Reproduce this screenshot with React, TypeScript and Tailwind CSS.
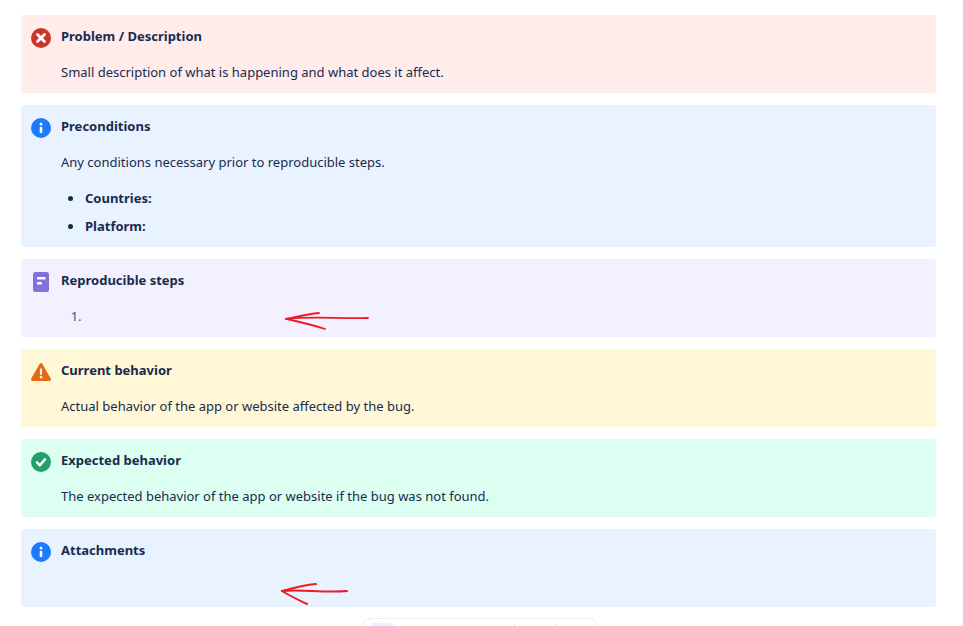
import React from "react";

const Err = () => (
  <svg width="20" height="20" viewBox="0 0 20 20"><circle cx="10" cy="10" r="10" fill="#C9372C" /><path d="M6.5 6.5l7 7M13.5 6.5l-7 7" stroke="#fff" strokeWidth="2.8" strokeLinecap="round" /></svg>
);
const Info = () => (
  <svg width="20" height="20" viewBox="0 0 20 20"><circle cx="10" cy="10" r="10" fill="#1D7AFC" /><circle cx="10" cy="5.9" r="1.5" fill="#fff" /><rect x="8.7" y="8.8" width="2.6" height="6.4" rx="1.1" fill="#fff" /></svg>
);
const Note = () => (
  <svg width="16" height="20" viewBox="0 0 16 20"><rect width="16" height="20" rx="2.5" fill="#8270DB" /><rect x="4" y="5" width="8.5" height="2.6" rx="0.6" fill="#fff" /><rect x="4" y="10" width="5" height="2.6" rx="0.6" fill="#fff" /></svg>
);
const Warn = () => (
  <svg width="20" height="18" viewBox="0 0 20 18"><path d="M8.6.9a1.6 1.6 0 0 1 2.8 0l8.3 14.7A1.6 1.6 0 0 1 18.3 18H1.7a1.6 1.6 0 0 1-1.4-2.4z" fill="#E56910" /><rect x="8.9" y="5.5" width="2.2" height="6.2" rx="1" fill="#fff" /><circle cx="10" cy="14.1" r="1.3" fill="#fff" /></svg>
);
const Ok = () => (
  <svg width="20" height="20" viewBox="0 0 20 20"><circle cx="10" cy="10" r="10" fill="#22A06B" /><path d="M6 10.4l2.9 2.9L14 7.4" stroke="#fff" strokeWidth="2.5" fill="none" strokeLinecap="round" strokeLinejoin="round" /></svg>
);

function Panel({ bg, icon, title, children }: { bg: string; icon: React.ReactNode; title: string; children: React.ReactNode }) {
  return (
    <div className={`relative rounded-[3px] pt-[10px] pb-[10px] pr-[10px] pl-[40px] ${bg}`}>
      <div className="absolute left-[10px] top-[13px] flex h-[20px] w-[20px] items-center justify-center">{icon}</div>
      <div className="h-[22px] text-[13px] font-bold leading-[22px]">{title}</div>
      {children}
    </div>
  );
}

export default function App() {
  return (
    <div className="relative h-[626px] w-[963px] overflow-hidden bg-white text-[#172B4D] [font-family:'Noto_Sans',sans-serif]">
      <div className="flex flex-col gap-[12px] pt-[15px] pl-[21px] w-[936px]">
        <Panel bg="bg-[#FFECEB]" icon={<Err />} title="Problem / Description">
          <p className="mt-[14px] h-[22px] text-[13px] leading-[22px]">Small description of what is happening and what does it affect.</p>
        </Panel>
        <Panel bg="bg-[#E9F2FF]" icon={<Info />} title="Preconditions">
          <p className="mt-[14px] text-[13px] leading-[22px]">Any conditions necessary prior to reproducible steps.</p>
          <ul className="mt-[14px] flex list-disc flex-col gap-[6px] pl-[24px] text-[13px] font-bold leading-[20px] marker:text-[15px]">
            <li className="h-[22px]">Countries:</li>
            <li className="h-[22px]">Platform:</li>
          </ul>
        </Panel>
        <Panel bg="bg-[#F3F0FF]" icon={<Note />} title="Reproducible steps">
          <ol className="mt-[14px] h-[22px] list-decimal pl-[24px] text-[13px] leading-[22px] marker:text-[#44546F]">
            <li></li>
          </ol>
        </Panel>
        <Panel bg="bg-[#FFF7D6]" icon={<Warn />} title="Current behavior">
          <p className="mt-[14px] text-[13px] leading-[22px]">Actual behavior of the app or website affected by the bug.</p>
        </Panel>
        <Panel bg="bg-[#DCFFF1]" icon={<Ok />} title="Expected behavior">
          <p className="mt-[14px] text-[13px] leading-[22px]">The expected behavior of the app or website if the bug was not found.</p>
        </Panel>
        <Panel bg="bg-[#E9F2FF]" icon={<Info />} title="Attachments">
          <div className="mt-[14px] h-[22px]" />
        </Panel>
      </div>

      <svg className="absolute left-[280px] top-[305px]" width="95" height="30" viewBox="0 0 95 30" fill="none" stroke="#EE1C25" strokeWidth="1.8" strokeLinecap="round">
        <path d="M6 14C30 11 60 14 88 13" />
        <path d="M6 14C16 12 28 9 39 8" />
        <path d="M7 14C20 17 33 20 45 24" />
      </svg>
      <svg className="absolute left-[275px] top-[578px]" width="80" height="30" viewBox="0 0 80 30" fill="none" stroke="#EE1C25" strokeWidth="2" strokeLinecap="round">
        <path d="M7 13C18 10 30 7 41 6" />
        <path d="M7 13C25 11 50 15 72 13" />
        <path d="M7 13C15 18 24 22 32 26" />
      </svg>

      <div className="absolute left-[362px] top-[618px] flex h-[40px] w-[235px] rounded-[8px] border border-[#EDEEF0] bg-white">
        <div className="ml-[7px] mt-[4px] h-[24px] w-[24px] rounded-[4px] bg-[#E9F2FF]" />
        <div className="ml-[120px] mt-[5px] h-[16px] w-px bg-[#DCDFE4]" />
        <div className="ml-[41px] mt-[5px] h-[16px] w-px bg-[#DCDFE4]" />
      </div>
    </div>
  );
}
